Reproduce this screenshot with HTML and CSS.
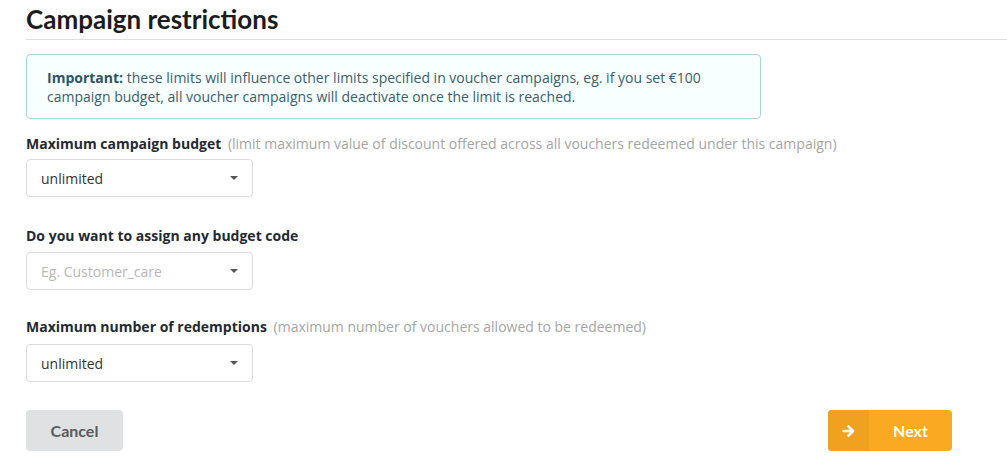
FILE: index.html
```html
<!DOCTYPE html>
<html>
<head>
<meta charset="utf-8">
<link rel="stylesheet" href="styles.css">
</head>
<body>
<div class="page">
  <h1 class="title">Campaign restrictions</h1>
  <div class="info"><strong>Important:</strong> these limits will influence other limits specified in voucher campaigns, eg. if you set €100 campaign budget, all voucher campaigns will deactivate once the limit is reached.</div>

  <div class="field f1">
    <label class="label">Maximum campaign budget <span class="hint">(limit maximum value of discount offered across all vouchers redeemed under this campaign)</span></label>
    <div class="select"><span class="value">unlimited</span><span class="caret"></span></div>
  </div>

  <div class="field f2">
    <label class="label">Do you want to assign any budget code</label>
    <div class="select"><span class="value placeholder">Eg. Customer_care</span><span class="caret"></span></div>
  </div>

  <div class="field f3">
    <label class="label">Maximum number of redemptions <span class="hint">(maximum number of vouchers allowed to be redeemed)</span></label>
    <div class="select"><span class="value">unlimited</span><span class="caret"></span></div>
  </div>

  <div class="actions">
    <button class="btn cancel">Cancel</button>
    <button class="btn next"><span class="icon"><svg width="14" height="14" viewBox="0 0 14 14"><path d="M1.5 7h9M6.5 2.5L11 7l-4.5 4.5" fill="none" stroke="#fff" stroke-width="2.6" stroke-linecap="round" stroke-linejoin="round"/></svg></span><span class="txt">Next</span></button>
  </div>
</div>
</body>
</html>
```

FILE: styles.css
```css
html, body {
  margin: 0;
  padding: 0;
  background: #fff;
}
.page {
  padding: 0 0 0 26px;
  font-family: "Open Sans", "Liberation Sans", sans-serif;
  color: #333;
}
.title {
  margin: 0;
  padding: 5px 0 5px;
  font-family: "Lato", "Open Sans", sans-serif;
  font-weight: 700;
  font-size: 26px;
  line-height: 29px;
  color: #1b1c1d;
  border-bottom: 1px solid #dedede;
}
.info {
  margin-top: 14px;
  width: 693px;
  padding: 13px 20px 12px 20px;
  border: 1px solid #a9d5de;
  border-radius: 4px;
  background: #f8ffff;
  font-size: 14px;
  line-height: 19px;
  color: #3a5d6c;
}
.info strong {
  font-weight: 700;
  color: #2b5566;
}
.field {
  display: flex;
  flex-direction: column;
  gap: 6px;
}
.f1 { margin-top: 15px; }
.f2 { margin-top: 29px; gap: 7px; }
.f3 { margin-top: 27px; gap: 8px; }
.label {
  font-size: 14px;
  line-height: 19px;
  font-weight: 700;
  color: #1f2a33;
}
.hint {
  font-weight: 400;
  color: #a5a5a5;
  margin-left: 3px;
}
.select {
  box-sizing: border-box;
  width: 227px;
  height: 38px;
  border: 1px solid #dcdcdc;
  border-radius: 4px;
  display: flex;
  align-items: center;
  justify-content: space-between;
  padding: 0 14px 0 14px;
  font-size: 14px;
  color: #333;
}
.placeholder { color: #b8b8b8; }
.caret {
  width: 0;
  height: 0;
  border-left: 4px solid transparent;
  border-right: 4px solid transparent;
  border-top: 4px solid #555;
}
.actions {
  margin-top: 28px;
  width: 926px;
  display: flex;
  justify-content: space-between;
}
.btn {
  height: 41px;
  border: 0;
  border-radius: 4px;
  font-family: "Lato", sans-serif;
  font-weight: 700;
  font-size: 16px;
  padding: 0;
  cursor: pointer;
}
.cancel {
  width: 97px;
  background: #e0e1e2;
  color: #5a5a5a;
}
.next {
  width: 124px;
  background: #f9aa22;
  color: #fff;
  display: flex;
  align-items: stretch;
  overflow: hidden;
}
.next .icon {
  width: 41px;
  background: #efa11f;
  display: flex;
  align-items: center;
  justify-content: center;
}
.next .txt {
  flex: 1;
  display: flex;
  align-items: center;
  justify-content: center;
}
```
